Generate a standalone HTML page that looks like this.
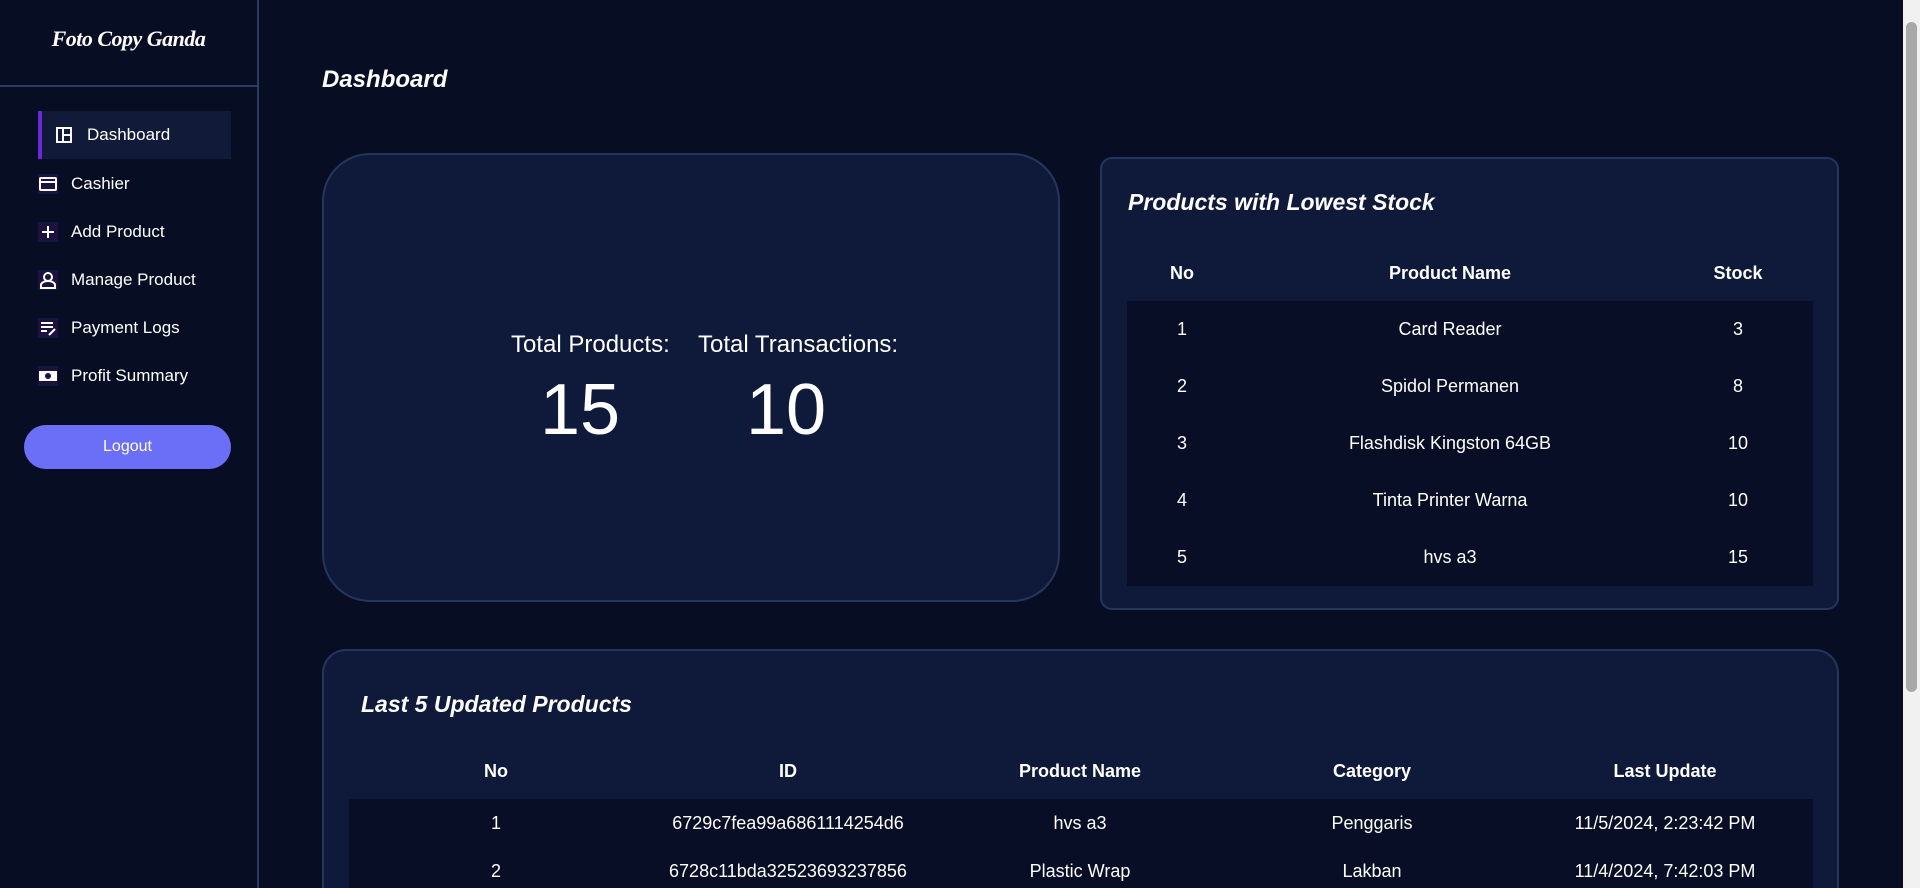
<!DOCTYPE html>
<html><head><meta charset="utf-8"><style>
*{margin:0;padding:0;box-sizing:border-box}
html{width:1920px;height:888px;overflow:hidden;background:#070d23}
body{width:1920px;height:888px;overflow:hidden;background:#070d23;color:#fff;font-family:"Liberation Sans",sans-serif;position:relative}
.side{position:absolute;left:0;top:0;width:259px;height:888px;background:#070d23;border-right:2px solid #2c3b5e}
.logo{position:absolute;top:26px;left:0;width:257px;text-align:center;font-family:"Liberation Serif",serif;font-weight:bold;font-style:italic;font-size:22px;letter-spacing:-0.5px}
.divl{position:absolute;top:85px;left:0;width:257px;height:2px;background:#2c3b5e}
.nav{position:absolute;left:38px;height:48px;display:flex;align-items:center;font-size:17px;width:193px}
.nav svg{width:20px;height:20px;margin-right:13px;background:#1c1240}
.nav.act{background:#111a38;border-left:4px solid #6a2ad6;padding-left:12px}
.nav.act svg{background:none}
.logout{position:absolute;left:24px;top:425px;width:207px;height:44px;border-radius:22px;background:#6b6ff8;font-size:16px;display:flex;align-items:center;justify-content:center}
.title{position:absolute;left:322px;top:66px;font-size:24px;font-weight:bold;font-style:italic}
.card{position:absolute;background:#0f1a3a;border:2px solid #26355a}
.stat{left:322px;top:153px;width:738px;height:449px;border-radius:48px}
.lbl{position:absolute;font-size:24px;top:176px}
.num{position:absolute;font-size:72px;top:214px}
.low{left:1100px;top:157px;width:739px;height:453px;border-radius:12px}
.ct{position:absolute;font-size:23px;font-weight:bold;font-style:italic}
table{position:absolute;border-collapse:collapse;font-size:18px}
th{font-weight:bold;height:56px}
td{text-align:center;background:#070e25}
.bot{left:322px;top:649px;width:1517px;height:239px;border-radius:24px 24px 0 0;border-bottom:none;overflow:hidden}
.sb{position:absolute;right:0;top:0;width:17px;height:888px;background:#f1f1f1}
.sb div{position:absolute;left:3px;top:22px;width:11px;height:670px;background:#a8a8a8;border-radius:6px}
</style></head><body>
<div class="side">
<div class="logo">Foto Copy Ganda</div>
<div class="divl"></div>
<div class="nav act" style="top:111px"><svg viewBox="0 0 20 20"><rect x="3" y="3" width="14" height="14" fill="none" stroke="#fff" stroke-width="2"/><path d="M9 3v14M9 10h8" stroke="#fff" stroke-width="2"/></svg>Dashboard</div>
<div class="nav" style="top:160px"><svg viewBox="0 0 20 20"><rect x="2" y="4" width="16" height="12" rx="1" fill="none" stroke="#fff" stroke-width="2"/><path d="M2 8h16" stroke="#fff" stroke-width="2"/></svg>Cashier</div>
<div class="nav" style="top:208px"><svg viewBox="0 0 20 20"><path d="M10 4v12M4 10h12" stroke="#fff" stroke-width="2"/></svg>Add Product</div>
<div class="nav" style="top:256px"><svg viewBox="0 0 20 20"><circle cx="10" cy="7" r="4" fill="none" stroke="#fff" stroke-width="2"/><path d="M3 18v-3c0-2 3-4 7-4s7 2 7 4v3z" fill="none" stroke="#fff" stroke-width="2"/></svg>Manage Product</div>
<div class="nav" style="top:304px"><svg viewBox="0 0 20 20"><path d="M3 5h12M3 9h12M3 13h6M11 17l6-6" stroke="#fff" stroke-width="2"/></svg>Payment Logs</div>
<div class="nav" style="top:352px"><svg viewBox="0 0 20 20"><rect x="1" y="5" width="18" height="10" fill="#fff"/><circle cx="10" cy="10" r="3" fill="#1c1240"/></svg>Profit Summary</div>
<div class="logout">Logout</div>
</div>
<div class="title">Dashboard</div>
<div class="card stat">
<div class="lbl" style="left:187px">Total Products:</div>
<div class="lbl" style="left:374px">Total Transactions:</div>
<div class="num" style="left:216px">15</div>
<div class="num" style="left:422px">10</div>
</div>
<div class="card low">
<div class="ct" style="left:26px;top:30px">Products with Lowest Stock</div>
<table style="left:25px;top:86px;width:686px">
<tr><th style="width:110px">No</th><th>Product Name</th><th style="width:150px">Stock</th></tr>
<tr><td style="height:57px">1</td><td>Card Reader</td><td>3</td></tr>
<tr><td style="height:57px">2</td><td>Spidol Permanen</td><td>8</td></tr>
<tr><td style="height:57px">3</td><td>Flashdisk Kingston 64GB</td><td>10</td></tr>
<tr><td style="height:57px">4</td><td>Tinta Printer Warna</td><td>10</td></tr>
<tr><td style="height:57px">5</td><td>hvs a3</td><td>15</td></tr>
</table>
</div>
<div class="card bot">
<div class="ct" style="left:37px;top:40px">Last 5 Updated Products</div>
<table style="left:25px;top:92px;width:1464px">
<tr><th style="width:294px;height:44px">No</th><th style="width:290px">ID</th><th style="width:294px">Product Name</th><th style="width:290px">Category</th><th>Last Update</th></tr>
<tr><td style="height:48px">1</td><td>6729c7fea99a6861114254d6</td><td>hvs a3</td><td>Penggaris</td><td>11/5/2024, 2:23:42 PM</td></tr>
<tr><td style="height:48px">2</td><td>6728c11bda32523693237856</td><td>Plastic Wrap</td><td>Lakban</td><td>11/4/2024, 7:42:03 PM</td></tr>
</table>
</div>
<div class="sb"><div></div></div>
</body></html>
